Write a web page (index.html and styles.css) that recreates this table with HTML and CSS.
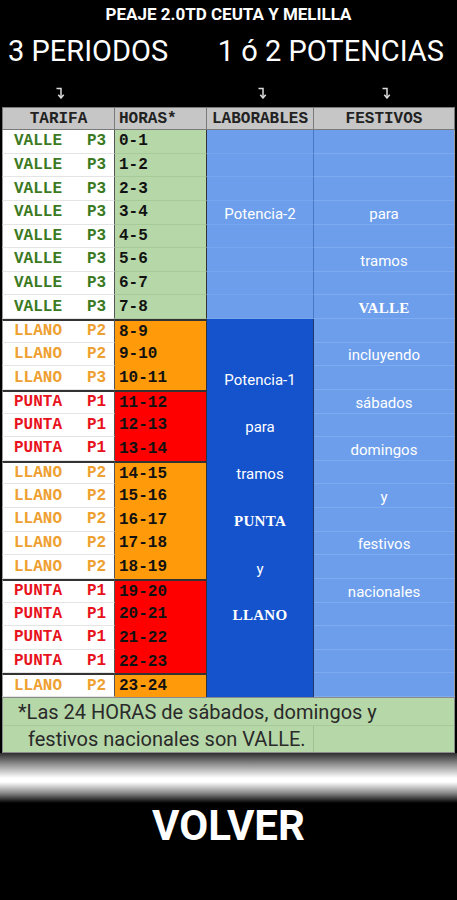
FILE: index.html
```html
<!DOCTYPE html>
<html lang="es">
<head>
<meta charset="utf-8">
<title>Peaje 2.0TD Ceuta y Melilla</title>
<link rel="stylesheet" href="styles.css">
</head>
<body>
<div class="page">
  <header class="top">
    <h1 class="title">PEAJE 2.0TD CEUTA Y MELILLA</h1>
    <div class="subs">
      <span>3 PERIODOS</span>
      <span>1 ó 2 POTENCIAS</span>
    </div>
    <div class="arrows">
      <span class="arw"><svg width="9" height="12" viewBox="0 0 9 12"><path d="M0.5 1.5H5V10" fill="none" stroke="#ddd" stroke-width="1.5"/><path d="M2.3 7.8L5 11L7.7 7.8" fill="none" stroke="#ddd" stroke-width="1.5"/></svg></span>
      <span></span>
      <span class="arw"><svg width="9" height="12" viewBox="0 0 9 12"><path d="M0.5 1.5H5V10" fill="none" stroke="#ddd" stroke-width="1.5"/><path d="M2.3 7.8L5 11L7.7 7.8" fill="none" stroke="#ddd" stroke-width="1.5"/></svg></span>
      <span class="arw"><svg width="9" height="12" viewBox="0 0 9 12"><path d="M0.5 1.5H5V10" fill="none" stroke="#ddd" stroke-width="1.5"/><path d="M2.3 7.8L5 11L7.7 7.8" fill="none" stroke="#ddd" stroke-width="1.5"/></svg></span>
    </div>
  </header>

  <div class="sheet">
    <div class="hd">TARIFA</div><div class="hd">HORAS*</div><div class="hd">LABORABLES</div><div class="hd">FESTIVOS</div>
  </div>
  <div class="grid">
    <div class="t valle"><span class="n">VALLE</span><span>P3</span></div><div class="h valle">0-1</div><div class="l lt"></div><div class="f"></div>
    <div class="t valle"><span class="n">VALLE</span><span>P3</span></div><div class="h valle">1-2</div><div class="l lt"></div><div class="f"></div>
    <div class="t valle"><span class="n">VALLE</span><span>P3</span></div><div class="h valle">2-3</div><div class="l lt"></div><div class="f"></div>
    <div class="t valle"><span class="n">VALLE</span><span>P3</span></div><div class="h valle">3-4</div><div class="l lt">Potencia-2</div><div class="f">para</div>
    <div class="t valle"><span class="n">VALLE</span><span>P3</span></div><div class="h valle">4-5</div><div class="l lt"></div><div class="f"></div>
    <div class="t valle"><span class="n">VALLE</span><span>P3</span></div><div class="h valle">5-6</div><div class="l lt"></div><div class="f">tramos</div>
    <div class="t valle"><span class="n">VALLE</span><span>P3</span></div><div class="h valle">6-7</div><div class="l lt"></div><div class="f"></div>
    <div class="t valle"><span class="n">VALLE</span><span>P3</span></div><div class="h valle">7-8</div><div class="l lt"></div><div class="f serif">VALLE</div>

    <div class="t llano gs"><span class="n">LLANO</span><span>P2</span></div><div class="h llano gs">8-9</div><div class="l dk"></div><div class="f"></div>
    <div class="t llano"><span class="n">LLANO</span><span>P2</span></div><div class="h llano">9-10</div><div class="l dk"></div><div class="f">incluyendo</div>
    <div class="t llano"><span class="n">LLANO</span><span>P3</span></div><div class="h llano">10-11</div><div class="l dk">Potencia-1</div><div class="f"></div>

    <div class="t punta gs"><span class="n">PUNTA</span><span>P1</span></div><div class="h punta gs">11-12</div><div class="l dk"></div><div class="f">sábados</div>
    <div class="t punta"><span class="n">PUNTA</span><span>P1</span></div><div class="h punta">12-13</div><div class="l dk">para</div><div class="f"></div>
    <div class="t punta"><span class="n">PUNTA</span><span>P1</span></div><div class="h punta">13-14</div><div class="l dk"></div><div class="f">domingos</div>

    <div class="t llano gs"><span class="n">LLANO</span><span>P2</span></div><div class="h llano gs">14-15</div><div class="l dk">tramos</div><div class="f"></div>
    <div class="t llano"><span class="n">LLANO</span><span>P2</span></div><div class="h llano">15-16</div><div class="l dk"></div><div class="f">y</div>
    <div class="t llano"><span class="n">LLANO</span><span>P2</span></div><div class="h llano">16-17</div><div class="l dk serif">PUNTA</div><div class="f"></div>
    <div class="t llano"><span class="n">LLANO</span><span>P2</span></div><div class="h llano">17-18</div><div class="l dk"></div><div class="f">festivos</div>
    <div class="t llano"><span class="n">LLANO</span><span>P2</span></div><div class="h llano">18-19</div><div class="l dk">y</div><div class="f"></div>

    <div class="t punta gs"><span class="n">PUNTA</span><span>P1</span></div><div class="h punta gs">19-20</div><div class="l dk"></div><div class="f">nacionales</div>
    <div class="t punta"><span class="n">PUNTA</span><span>P1</span></div><div class="h punta">20-21</div><div class="l dk serif">LLANO</div><div class="f"></div>
    <div class="t punta"><span class="n">PUNTA</span><span>P1</span></div><div class="h punta">21-22</div><div class="l dk"></div><div class="f"></div>
    <div class="t punta"><span class="n">PUNTA</span><span>P1</span></div><div class="h punta">22-23</div><div class="l dk"></div><div class="f"></div>

    <div class="t llano gs"><span class="n">LLANO</span><span>P2</span></div><div class="h llano gs">23-24</div><div class="l dk"></div><div class="f"></div>
  </div>
  <div class="note">
    <div class="note-l1">*Las 24 HORAS de sábados, domingos y</div>
    <div class="note-l2"><span class="note-t">festivos nacionales son VALLE.</span><span class="note-c"></span></div>
  </div>
  <div class="shine"></div>
  <div class="back">VOLVER</div>
</div>
</body>
</html>
```

FILE: styles.css
```css
html, body {
  margin: 0;
  padding: 0;
  background: #000;
}
.page {
  width: 457px;
  height: 900px;
  background: #000;
  overflow: hidden;
  font-family: Roboto, "Liberation Sans", sans-serif;
}
.top {
  height: 107px;
}
.title {
  margin: 0;
  padding-top: 4px;
  font-size: 17px;
  line-height: 20px;
  font-weight: 700;
  color: #fff;
  text-align: center;
}
.subs {
  display: flex;
  justify-content: space-between;
  margin-top: 11px;
  padding: 0 13px 0 8px;
  color: #fff;
  font-size: 29px;
  line-height: 32px;
}
.arrows {
  display: grid;
  grid-template-columns: 113px 92px 107px 141px;
  margin: 20px 0 0 2px;
  height: 20px;
}
.arw {
  display: flex;
  justify-content: center;
  padding-left: 4px;
}
.arw svg {
  display: block;
}
.sheet {
  display: grid;
  grid-template-columns: 113px 92px 107px 141px;
  margin-left: 2px;
  width: 453px;
  height: 23px;
  box-sizing: border-box;
}
.hd {
  background: #c6c6c6;
  border: 1px solid #7a7a7a;
  border-left: none;
  font-family: "Liberation Mono", monospace;
  font-weight: 700;
  font-size: 16px;
  color: #222;
  display: flex;
  align-items: center;
  justify-content: center;
  box-sizing: border-box;
}
.hd:first-child {
  border-left: 1px solid #7a7a7a;
}
.hd:nth-child(2) {
  justify-content: flex-start;
  padding-left: 4px;
}
.grid {
  display: grid;
  grid-template-columns: 113px 92px 107px 141px;
  grid-template-rows: repeat(24, 23.625px);
  margin-left: 2px;
  width: 453px;
}
.grid > div {
  box-sizing: border-box;
  display: flex;
  align-items: center;
}
.t {
  background: #fff;
  border-left: 1px solid #9a9a9a;
  border-bottom: 1px solid #e4e4e4;
  border-right: 1px solid #555;
  padding-left: 11px;
  font-family: "Liberation Mono", monospace;
  font-weight: 700;
  font-size: 16px;
}
.t .n {
  display: inline-block;
  width: 73px;
}
.t.valle { color: #3b7a1f; }
.t.llano { color: #eea030; }
.t.punta { color: #e8121c; }
.h {
  padding-left: 4px;
  font-family: "Liberation Mono", monospace;
  font-weight: 700;
  font-size: 16px;
  color: #111;
  border-right: 1px solid #333;
}
.h.valle {
  background: #b6d7a8;
  border-bottom: 1px solid #a8c99a;
}
.h.llano { background: #ff9a0a; }
.h.punta { background: #ff0000; }
.gs {
  border-top: 2px solid #333;
}
.l, .f {
  justify-content: center;
  color: #fff;
  font-size: 15px;
  padding-top: 3px;
}
.l.lt {
  background: #6d9eeb;
  border-bottom: 1px solid #78a6ee;
  border-right: 1px solid #4a78c4;
}
.l.dk {
  background: #1553cc;
  border-right: 1px solid #223a6a;
}
.f {
  background: #6d9eeb;
  border-bottom: 1px solid #7eaaf0;
  border-right: 1px solid #9a9a9a;
}
.serif {
  font-family: "Liberation Serif", serif;
  font-weight: 700;
  font-size: 15px;
  letter-spacing: 0.3px;
}
.note {
  margin-left: 2px;
  width: 453px;
  height: 56px;
  background: #b6d7a8;
  border: 1px solid #8a8a8a;
  box-sizing: border-box;
  color: #2a2a2a;
  font-size: 20px;
}
.note-l1 {
  height: 28px;
  line-height: 28px;
  padding-left: 15px;
  border-bottom: 1px solid #a9c99b;
  box-sizing: border-box;
}
.note-l2 {
  display: flex;
  height: 26px;
  line-height: 26px;
}
.note-t {
  width: 311px;
  padding-left: 25px;
  box-sizing: border-box;
  border-right: 1px solid #a0bf92;
}
.shine {
  height: 50px;
  background: linear-gradient(#2e2e2e 0%, #9a9a9a 25%, #fff 50%, #fff 58%, #8a8a8a 80%, #000 100%);
}
.back {
  text-align: center;
  color: #fff;
  font-weight: 700;
  font-size: 42px;
  line-height: 46px;
}
```
